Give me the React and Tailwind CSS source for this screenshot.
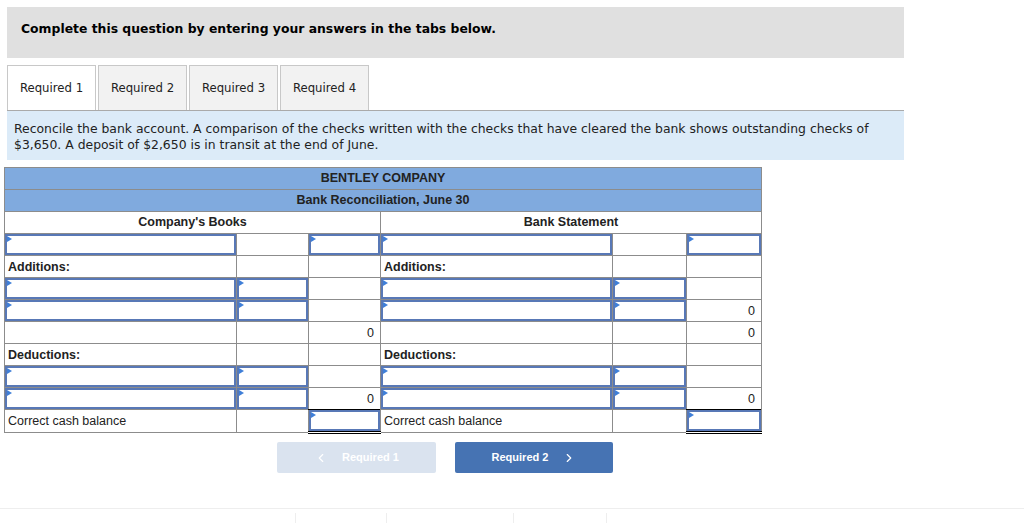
import React from 'react'
import { ChevronLeft, ChevronRight } from 'lucide-react'

const verdana = { fontFamily: '"DejaVu Sans", Verdana, sans-serif' }

const rows = [
    ['in', '', 'in', 'in', '', 'in'],
    ['Additions:', '', '', 'Additions:', '', ''],
    ['in', 'in', '', 'in', 'in', ''],
    ['in', 'in', '', 'in', 'in', '0'],
    ['', '', '0', '', '', '0'],
    ['Deductions:', '', '', 'Deductions:', '', ''],
    ['in', 'in', '', 'in', 'in', ''],
    ['in', 'in', '0', 'in', 'in', '0'],
    ['Correct cash balance', '', 'total', 'Correct cash balance', '', 'total'],
]

const Marker = () => (
    <svg className="absolute left-0 top-0" width="5" height="6" viewBox="0 0 5 6">
        <path d="M0 0L5 3L0 6Z" fill="#3f7fd8" />
    </svg>
)

const InputBox = () => (
    <div className="relative h-[21px] border-2 border-[#5878b6] bg-white">
        <Marker />
    </div>
)

const Cell = ({ value, col }) => {
    const numCol = col === 2 || col === 5
    if (value === 'in') {
        return <td className="p-0 border border-[#8c8c8c]"><InputBox /></td>
    }
    if (value === 'total') {
        return (
            <td className="p-0 border border-[#8c8c8c] border-t-black border-b-[3px] border-b-black border-double">
                <InputBox />
            </td>
        )
    }
    const bold = value === 'Additions:' || value === 'Deductions:'
    return (
        <td className={`border border-[#8c8c8c] px-[3px] pt-[1px] text-[12.5px] text-[#222] ${numCol ? 'text-right pr-[6px]' : 'text-left'} ${bold ? 'font-bold' : ''}`}>
            {value}
        </td>
    )
}

const tabs = ['Required 1', 'Required 2', 'Required 3', 'Required 4']

export default function App() {
    return (
        <div className="w-[1024px] h-[523px] bg-white overflow-hidden pt-[7px]" style={{ fontFamily: '"Liberation Sans", Arial, sans-serif' }}>
            <div className="ml-[7px] w-[897px] h-[51px] bg-[#e0e0e0] pt-[14px] pl-[14px]" style={verdana}>
                <p className="text-[12.4px] leading-4 font-bold text-black">Complete this question by entering your answers in the tabs below.</p>
            </div>

            <div className="ml-[7px] w-[897px] mt-[7px] flex gap-[2px] border-b border-[#aaaaaa]" style={verdana}>
                {tabs.map((t, i) => (
                    <div key={t} className={`w-[89px] h-[45px] pt-[2px] flex items-center justify-center border border-b-0 border-[#c8c8c8] text-[11.7px] text-[#222] ${i === 0 ? 'bg-white' : 'bg-[#f2f2f2]'}`}>
                        {t}
                    </div>
                ))}
            </div>

            <div className="ml-[7px] w-[897px] h-[49px] bg-[#dcebf8] pt-[10px] pl-[7px] text-[12.4px] leading-4 text-[#222] whitespace-nowrap" style={verdana}>
                Reconcile the bank account. A comparison of the checks written with the checks that have cleared the bank shows outstanding checks of<br />
                $3,650. A deposit of $2,650 is in transit at the end of June.
            </div>

            <table className="ml-[4px] mt-[7px] w-[757px] table-fixed border-collapse border border-[#8c8c8c]">
                <colgroup>
                    <col className="w-[232px]" />
                    <col className="w-[72px]" />
                    <col className="w-[72px]" />
                    <col className="w-[232px]" />
                    <col className="w-[74px]" />
                    <col className="w-[75px]" />
                </colgroup>
                <tbody>
                    <tr className="h-[22px] bg-[#80aade]">
                        <td colSpan={6} className="border border-[#8c8c8c] text-center text-[12.5px] font-bold text-[#222]">BENTLEY COMPANY</td>
                    </tr>
                    <tr className="h-[22px] bg-[#80aade]">
                        <td colSpan={6} className="border border-[#8c8c8c] text-center text-[12.5px] font-bold text-[#222]">Bank Reconciliation, June 30</td>
                    </tr>
                    <tr className="h-[22px]">
                        <td colSpan={3} className="border border-[#8c8c8c] text-center text-[12.5px] font-bold text-[#222]">Company's Books</td>
                        <td colSpan={3} className="border border-[#8c8c8c] text-center text-[12.5px] font-bold text-[#222]">Bank Statement</td>
                    </tr>
                    {rows.map((r, ri) => (
                        <tr key={ri} className="h-[22px]">
                            {r.map((v, ci) => <Cell key={ci} value={v} col={ci} />)}
                        </tr>
                    ))}
                </tbody>
            </table>

            <div className="flex gap-[19px] ml-[277px] mt-[8px]">
                <button className="w-[159px] h-[31px] rounded-[2px] bg-[#dae3ef] text-white text-[11px] font-bold flex items-center justify-center gap-[14px]">
                    <ChevronLeft size={14} strokeWidth={2} />
                    <span>Required 1</span>
                </button>
                <button className="w-[158px] h-[31px] rounded-[2px] bg-[#4673b3] text-white text-[11px] font-bold flex items-center justify-center gap-[14px]">
                    <span>Required 2</span>
                    <ChevronRight size={14} strokeWidth={2} />
                </button>
            </div>

            <div className="mt-[35px] border-t border-[#eeeeee] flex pt-[4px] h-[20px]">
                <div className="w-[295px]" />
                <div className="w-[91px] border-l border-[#eeeeee]" />
                <div className="w-[127px] border-l border-[#eeeeee]" />
                <div className="w-[93px] border-l border-[#eeeeee]" />
                <div className="border-l border-[#eeeeee]" />
            </div>
        </div>
    )
}
